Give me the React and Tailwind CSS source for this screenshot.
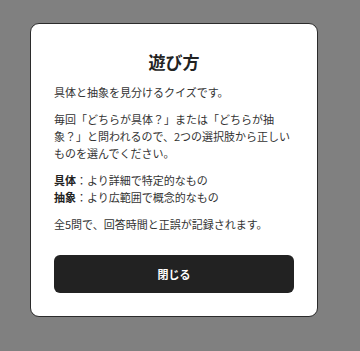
export default function App() {
    return (
        <div
            className="min-h-[351px] w-full bg-[#808080] pt-[23px] pl-[30px]"
            style={{ fontFamily: '"Noto Sans CJK JP", "Noto Sans", sans-serif' }}
        >
            <div className="w-[288px] rounded-[9px] border-[1.5px] border-[#2b2b2b] bg-white px-[23px] pt-[24px] pb-[23px]">
                <h2 className="text-center text-[17px] font-bold leading-[28px] text-[#222]">遊び方</h2>

                <div className="mt-[8px] space-y-[10px] text-[11px] leading-[17px] text-[#333]">
                    <p>具体と抽象を見分けるクイズです。</p>
                    <p>
                        毎回「どちらが具体？」または「どちらが抽象？」と問われるので、2つの選択肢から正しいものを選んでください。
                    </p>
                    <p>
                        <span className="font-bold text-[#222]">具体</span>：より詳細で特定的なもの
                        <br />
                        <span className="font-bold text-[#222]">抽象</span>：より広範囲で概念的なもの
                    </p>
                    <p>全5問で、回答時間と正誤が記録されます。</p>
                </div>

                <button
                    type="button"
                    className="mt-[22px] h-[38px] w-full rounded-[6px] bg-[#222] text-[11px] font-bold text-white"
                >
                    閉じる
                </button>
            </div>
        </div>
    );
}
